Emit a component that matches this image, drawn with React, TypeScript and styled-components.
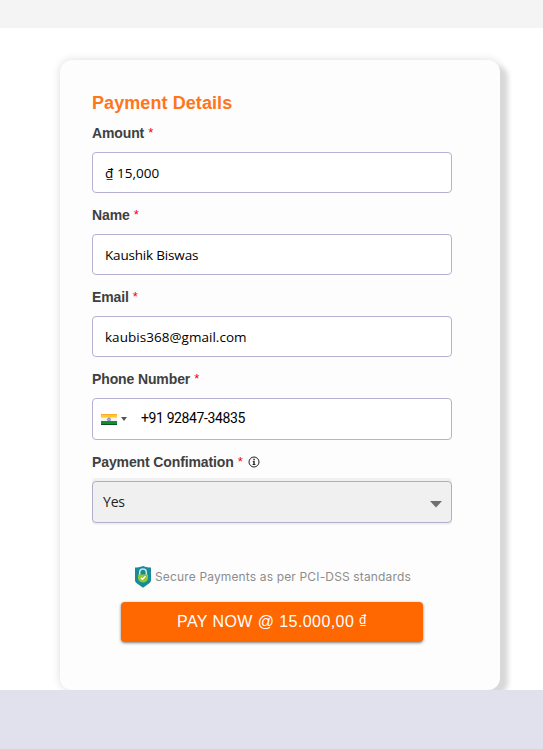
import React from 'react';
import styled, { createGlobalStyle } from 'styled-components';

const GlobalStyle = createGlobalStyle`
  * { box-sizing: border-box; }
  body { margin: 0; background: #fff; font-family: "Liberation Sans", Arial, sans-serif; }
`;

const Page = styled.main`
  width: 543px;
  height: 749px;
  display: flex;
  flex-direction: column;
  overflow: hidden;
  background: #fff;
`;

const TopBar = styled.header`
  flex: 0 0 28px;
  background: #f4f4f4;
`;

const Content = styled.section`
  flex: 0 0 662px;
  padding: 32px 43px 0 60px;
  overflow: hidden;
`;

const Footer = styled.footer`
  flex: 1;
  background: #e1e1ee;
`;

const Card = styled.form`
  height: 630px;
  padding: 32px 48px 0 32px;
  border-radius: 12px;
  background: #fdfdfd;
  box-shadow: 9px 5px 5px -1px #d8d8d8, 0 0 8px rgba(0, 0, 0, 0.14);
`;

const Title = styled.h1`
  margin: 0;
  height: 32px;
  font-size: 18px;
  line-height: 22px;
  font-weight: 700;
  letter-spacing: 0.08px;
  color: #ff751a;
`;

const Field = styled.div<{ $height: number }>`
  height: ${(p) => p.$height}px;
`;

const Label = styled.label`
  display: flex;
  align-items: center;
  height: 18px;
  margin-bottom: 10px;
  font-size: 14px;
  line-height: 18px;
  font-weight: 700;
  letter-spacing: -0.12px;
  color: #404040;
`;

const Star = styled.span`
  margin-left: 4px;
  font-weight: 400;
  font-size: 13px;
  color: #f00018;
`;

const InfoIcon = styled.svg`
  margin-left: 5px;
  width: 12px;
  height: 12px;
`;

const InputBox = styled.div<{ $tall?: boolean }>`
  display: flex;
  align-items: center;
  height: ${(p) => (p.$tall ? 42 : 41)}px;
  padding-left: ${(p) => (p.$tall ? 8 : 12)}px;
  border: 1px solid #b5b1d2;
  border-radius: 4px;
  background: #fff;
`;

const Value = styled.span<{ $spacing?: number }>`
  font-family: "Open Sans", "Noto Sans", sans-serif;
  font-size: 13.5px;
  line-height: 20px;
  letter-spacing: ${(p) => p.$spacing ?? 0}px;
  white-space: pre;
  color: #000;
`;

const Flag = styled.svg`
  width: 16px;
  height: 11px;
`;

const Caret = styled.svg`
  width: 6px;
  height: 4px;
  margin: 0 14px 0 4px;
`;

const Phone = styled.span`
  padding-bottom: 2px;
  font-family: Roboto, sans-serif;
  font-size: 14px;
  line-height: 20px;
  letter-spacing: -0.38px;
  color: #000;
`;

const Select = styled.div`
  display: flex;
  align-items: center;
  justify-content: space-between;
  height: 42px;
  padding: 0 9px 0 10px;
  border: 1px solid #b0acca;
  border-radius: 4px;
  background: #f0f0f0;
  box-shadow: 0 -3px 0 #f0f0f0, 0 2px 0 #f1f1f1;
`;

const Choice = styled.span`
  padding-bottom: 2px;
  font-family: "Open Sans", "Noto Sans", sans-serif;
  font-size: 14px;
  letter-spacing: -0.2px;
  color: #222;
`;

const SelectArrow = styled.svg`
  width: 12px;
  height: 7px;
  margin-top: 4px;
`;

const Security = styled.div`
  display: flex;
  align-items: center;
  height: 24px;
  margin-left: 42px;
`;

const Shield = styled.svg`
  width: 18px;
  height: 22px;
`;

const SecurityText = styled.span`
  margin-left: 3px;
  font-family: Inter, sans-serif;
  font-size: 12px;
  line-height: 18px;
  letter-spacing: 0.15px;
  white-space: nowrap;
  color: #8d8d8d;
`;

const PayButton = styled.button`
  display: flex;
  align-items: center;
  justify-content: center;
  width: 302px;
  height: 40px;
  margin: 13px 0 0 29px;
  padding: 0 0 1px;
  border: 0;
  border-radius: 4px;
  background: #ff6700;
  box-shadow: 0 1px 3px rgba(0, 0, 0, 0.5);
  font-family: "Liberation Sans", Arial, sans-serif;
  font-size: 16px;
  letter-spacing: 0.42px;
  white-space: pre;
  color: #fff;
`;

const ButtonCurrency = styled.span`
  padding-bottom: 4px;
  font-family: "Noto Sans", sans-serif;
  font-size: 12px;
`;

export default function App() {
  return (
    <>
      <GlobalStyle />
      <Page>
        <TopBar />
        <Content>
          <Card>
            <Title>Payment Details</Title>
            <Field $height={82}>
              <Label>Amount<Star>*</Star></Label>
              <InputBox><Value $spacing={0.05}>₫ 15,000</Value></InputBox>
            </Field>
            <Field $height={82}>
              <Label>Name<Star>*</Star></Label>
              <InputBox><Value $spacing={-0.18}>Kaushik Biswas</Value></InputBox>
            </Field>
            <Field $height={82}>
              <Label>Email<Star>*</Star></Label>
              <InputBox><Value $spacing={0.03}>kaubis368@gmail.com</Value></InputBox>
            </Field>
            <Field $height={83}>
              <Label>Phone Number<Star>*</Star></Label>
              <InputBox $tall>
                <Flag viewBox="0 0 16 11">
                  <path d="M0 0h16v4H0z" fill="#ffc928" />
                  <path d="M0 0h16v1H0z" fill="#ffa928" />
                  <path d="M0 3h16v1H0z" fill="#ffe45a" />
                  <path d="M0 4h16v3H0z" fill="#f3f3f3" />
                  <path d="M0 7h16v4H0z" fill="#138b32" />
                  <path d="M0 10h16v1H0z" fill="#07551c" />
                  <circle cx="8" cy="5.5" r="1.5" fill="#b4b4e4" stroke="#6666ad" strokeWidth=".7" />
                </Flag>
                <Caret viewBox="0 0 6 4"><path d="M0 0h6L3 4z" fill="#555" /></Caret>
                <Phone>+91 92847-34835</Phone>
              </InputBox>
            </Field>
            <Field $height={112}>
              <Label>
                Payment Confimation<Star>*</Star>
                <InfoIcon viewBox="0 0 12 12">
                  <circle cx="6" cy="6" r="5" fill="none" stroke="#222" />
                  <path d="M5.3 2.7h1.5v1.5H5.3zM4.7 5h2v3.1h.7V9H4.6v-.9h.7V5.8h-.6z" fill="#222" />
                </InfoIcon>
              </Label>
              <Select>
                <Choice>Yes</Choice>
                <SelectArrow viewBox="0 0 12 7"><path d="M0 0h12L6 6.6z" fill="#707070" /></SelectArrow>
              </Select>
            </Field>
            <Security>
              <Shield viewBox="0 0 18 22">
                <path d="M9 0C6 1.2 3.5 1.6 1 1.6V14.5Q1 16 3 17.4L9 21.8l6-4.4q2-1.4 2-2.9V1.6C14.5 1.6 12 1.2 9 0z" fill="#168c99" />
                <path d="M5.7 9V6.3a3.3 3.3 0 016.6 0V9" fill="none" stroke="#c9e3ee" strokeWidth="1.5" />
                <path d="M4 8.5h10v3.6q0 3.7-5 4.5-5-.8-5-4.5z" fill="#94c832" />
                <path d="M6.8 11.7l1.7 1.6 3-3" fill="none" stroke="#fff" strokeWidth="1.3" />
              </Shield>
              <SecurityText>Secure Payments as per PCI-DSS standards</SecurityText>
            </Security>
            <PayButton type="button">PAY NOW @ 15.000,00 <ButtonCurrency>₫</ButtonCurrency></PayButton>
          </Card>
        </Content>
        <Footer />
      </Page>
    </>
  );
}
